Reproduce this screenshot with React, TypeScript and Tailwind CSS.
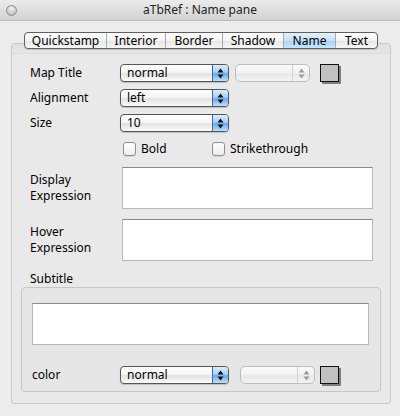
import type { ReactNode } from "react";

const Arrows = ({ color }: { color: string }) => (
  <svg width="7" height="11" viewBox="0 0 7 11">
    <path d="M3.5 0.5 L6.5 4.5 L0.5 4.5 Z" fill={color} />
    <path d="M0.5 6.5 L6.5 6.5 L3.5 10.5 Z" fill={color} />
  </svg>
);

const Popup = ({ value }: { value: string }) => (
  <div className="flex h-[18px] w-[109px] overflow-hidden rounded-[4px] border border-[#555] bg-[linear-gradient(#ffffff,#f6f6f6_45%,#e2e2e2_55%,#fbfbfb)] shadow-[0_1px_1px_rgba(0,0,0,0.18)]">
    <span className="flex-1 pl-[6px] text-[12px] leading-[16px] text-black">{value}</span>
    <span className="flex w-[16px] items-center justify-center border-l border-[#44689e] bg-[linear-gradient(#dcecfc,#a9d0f5_45%,#66abef_55%,#bfe0fb)]">
      <Arrows color="#111" />
    </span>
  </div>
);

const DisabledPopup = () => (
  <div className="flex h-[18px] w-[75px] overflow-hidden rounded-[5px] border border-[#bdbdbd] bg-[linear-gradient(#fbfbfb,#f1f1f1_50%,#e7e7e7_55%,#f4f4f4)]">
    <span className="flex-1" />
    <span className="flex w-[17px] items-center justify-center border-l border-[#d2d2d2]">
      <Arrows color="#9c9c9c" />
    </span>
  </div>
);

const ColorWell = () => (
  <div className="h-[18px] w-[19px] border border-[#111] bg-[#c1c1c1] shadow-[2px_2px_0_#7e7e7e]" />
);

const Checkbox = ({ label }: { label: string }) => (
  <div className="flex h-[14px] items-center gap-[5px]">
    <div className="h-[14px] w-[13px] rounded-[3px] border border-[#8e8e8e] bg-[linear-gradient(#ffffff,#ececec)] shadow-[0_1px_0_rgba(0,0,0,0.08)]" />
    <span className="text-[12px] leading-[14px]">{label}</span>
  </div>
);

const TextBox = ({ className }: { className: string }) => (
  <div className={`h-[42px] border border-[#b9b9b9] border-t-[#8a8a8a] bg-white ${className}`} />
);

const Row = ({ label, children }: { label: string; children: ReactNode }) => (
  <div className="flex h-[18px] items-center">
    <span className="w-[90px] text-[12px] leading-[16px]">{label}</span>
    {children}
  </div>
);

const tabs = [
  { name: "Quickstamp", w: "w-[81px]" },
  { name: "Interior", w: "w-[59px]" },
  { name: "Border", w: "w-[57px]" },
  { name: "Shadow", w: "w-[61px]" },
  { name: "Name", w: "w-[52px]", active: true },
  { name: "Text", w: "w-[42px]" },
];

export default function App() {
  return (
    <div className="flex h-[416px] w-[400px] flex-col bg-[#ececec] font-['Noto_Sans',sans-serif] text-black">
      {/* title bar */}
      <div className="flex h-[21px] shrink-0 items-center border-b border-[#bcbcbc] bg-[linear-gradient(#ebebeb,#d3d3d3)]">
        <div className="ml-[6px] h-[11px] w-[11px] rounded-full border border-[#8d8d8d] bg-[radial-gradient(circle_at_50%_30%,#f4f4f4,#c4c4c4_70%,#a9a9a9)]" />
        <div className="flex-1 pr-[17px] text-center text-[12px] leading-[16px] text-[#222]">
          aTbRef : Name pane
        </div>
      </div>

      {/* tabs */}
      <div className="relative z-10 mt-[11px] flex shrink-0 pl-[24px]">
        <div className="flex h-[17px] overflow-hidden rounded-[4px] border border-[#5f5f5f] bg-[linear-gradient(#ffffff,#f3f3f3_50%,#e6e6e6_55%,#f7f7f7)] shadow-[0_1px_1px_rgba(0,0,0,0.15)]">
          {tabs.map((t, i) => (
            <div
              key={t.name}
              className={`${t.w} flex items-center justify-center text-[12px] leading-[15px] ${
                i > 0 ? "border-l border-[#a9a9a9]" : ""
              } ${t.active ? "bg-[linear-gradient(#e3f1fd,#c3e1fb_50%,#a8d3f8_55%,#c9e6fd)]" : ""}`}
            >
              {t.name}
            </div>
          ))}
        </div>
      </div>

      {/* panel */}
      <div className="mx-[11px] -mt-[6px] flex w-[380px] shrink-0 flex-col rounded-[3px] border border-[#cacaca] bg-[#e9e9e9] pb-[11px]">
        <div className="h-[10px] shrink-0 border-b border-[#dcdcdc] bg-[linear-gradient(#e0e0e0,#e6e6e6)]" />
        <div className="flex flex-col pl-[18px]">
          <div className="mt-[10px]">
            <Row label="Map Title">
              <Popup value="normal" />
              <div className="ml-[6px]">
                <DisabledPopup />
              </div>
              <div className="ml-[10px]">
                <ColorWell />
              </div>
            </Row>
          </div>
          <div className="mt-[7px]">
            <Row label="Alignment">
              <Popup value="left" />
            </Row>
          </div>
          <div className="mt-[7px]">
            <Row label="Size">
              <Popup value="10" />
            </Row>
          </div>
          <div className="mt-[10px] flex h-[14px] pl-[93px]">
            <div className="w-[89px]">
              <Checkbox label="Bold" />
            </div>
            <Checkbox label="Strikethrough" />
          </div>

          <div className="mt-[11px] flex h-[42px] items-center">
            <span className="w-[92px] text-[12px] leading-[16px]">
              Display
              <br />
              Expression
            </span>
            <TextBox className="w-[251px]" />
          </div>
          <div className="mt-[10px] flex h-[42px] items-center">
            <span className="w-[92px] text-[12px] leading-[16px]">
              Hover
              <br />
              Expression
            </span>
            <TextBox className="w-[251px]" />
          </div>

          <div className="mt-[10px] h-[16px] text-[12px] leading-[16px]">Subtitle</div>
        </div>

        {/* subtitle group */}
        <div className="mx-[9px] flex h-[105px] shrink-0 flex-col rounded-[4px] border border-[#c6c6c6] bg-[#e6e6e6] pl-[10px]">
          <TextBox className="mt-[15px] w-[337px]" />
          <div className="mt-[21px] flex h-[18px] items-center">
            <span className="w-[88px] text-[12px] leading-[16px]">color</span>
            <Popup value="normal" />
            <div className="ml-[11px]">
              <DisabledPopup />
            </div>
            <div className="ml-[5px]">
              <ColorWell />
            </div>
          </div>
        </div>
      </div>
    </div>
  );
}
